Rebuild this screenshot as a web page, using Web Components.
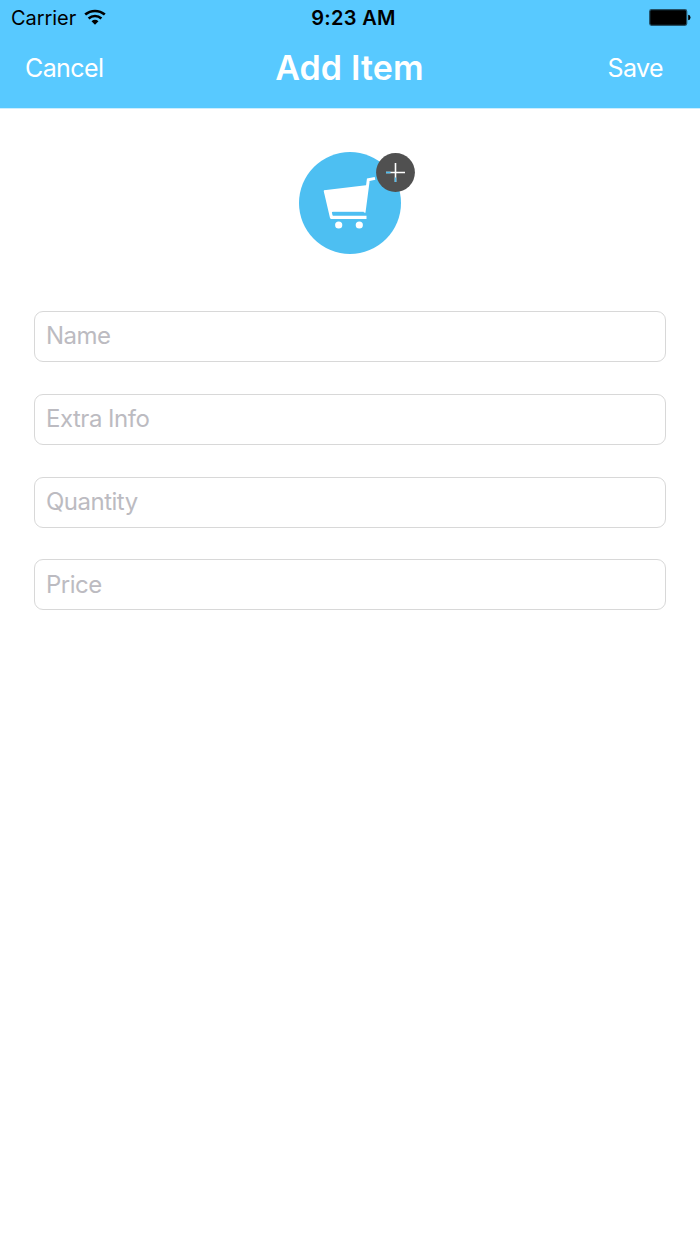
<!DOCTYPE html>
<html lang="en">
<head>
<meta charset="utf-8">
<title>Add Item</title>
<style>
html,body{margin:0;height:100%;background:#fff}
body{font-family:Inter,"Liberation Sans",sans-serif}
</style>
</head>
<body>
<add-item-screen></add-item-screen>
<script>
const define = (name, html) => customElements.define(name, class extends HTMLElement {
  constructor() {
    super();
    const t = document.createElement('template');
    t.innerHTML = html;
    this.attachShadow({ mode: 'open' }).append(t.content.cloneNode(true));
  }
});

define('status-bar', `
<style>
:host{display:grid;grid-template-columns:1fr auto 1fr;align-items:center;height:36px;padding:0 9px 0 11px;box-sizing:border-box;color:#000;font-size:20px;line-height:36px}
.left{display:flex;align-items:center}
.carrier{letter-spacing:-.05px}
.wifi{margin:-3px 0 0 8px;display:block}
.time{font-weight:600;letter-spacing:.3px;transform:translateX(2.5px)}
.battery{justify-self:end;display:block;margin-top:-1px}
</style>
<div class="left"><span class="carrier">Carrier</span>
<svg class="wifi" width="22" height="16" viewBox="0 0 22 16"><g fill="none" stroke="#000" stroke-width="2.6"><path d="M1.2 5.6C6.8.7 15.2.7 20.8 5.6"/><path d="M4.6 9.4C8.3 6.2 13.7 6.2 17.4 9.4"/></g><path d="M7.5 12.2Q11 9.4 14.5 12.2L11 15.8Z"/></svg></div>
<span class="time">9:23 AM</span>
<svg class="battery" width="42" height="17" viewBox="0 0 42 17"><rect x=".7" y=".7" width="37" height="15.6" rx="1.8" stroke="#235066" stroke-width="1.2"/><path d="M39.2 5.8Q41.5 6 41.5 8.5T39.2 11.2Z"/></svg>`);

define('nav-bar', `
<style>
:host{display:grid;grid-template-columns:1fr auto 1fr;align-items:center;height:62px;padding:0 37px 0 25px;color:#fff;font-size:25px;line-height:62px;letter-spacing:-.6px}
.right{justify-self:end}
.title{font-size:34px;font-weight:600;letter-spacing:.15px;transform:translateX(5.5px)}
</style>
<span class="left"><slot name="left"></slot></span><span class="title"><slot></slot></span><span class="right"><slot name="right"></slot></span>`);

define('item-picture', `
<style>
:host{display:block;position:relative;width:102px;height:102px}
svg{display:block}
.cart{filter:blur(.5px)}
.badge{position:absolute;left:77px;top:1px}
</style>
<svg width="102" height="102" viewBox="0 0 102 102"><circle cx="51" cy="51" r="51" fill="#4dbff2"/>
<g class="cart"><path d="M25 38.3L69 33L65.5 60H31Z" fill="#fff"/>
<path d="M76 26.4L69.3 27.8L65 60.5" fill="none" stroke="#fff" stroke-width="3"/>
<path d="M26.2 38.5L32.5 65.3H67.5" fill="none" stroke="#fff" stroke-width="3.2" stroke-linejoin="round"/>
<path d="M33.5 61.2H64.8" stroke="#4dbff2" stroke-width="2.8"/>
<g fill="#fff"><circle cx="39.7" cy="73" r="3.6"/><circle cx="60.3" cy="73" r="3.6"/></g></g></svg>
<svg class="badge" width="39" height="39" viewBox="0 0 39 39"><circle cx="19.5" cy="19.5" r="19.4" fill="#505050"/><path d="M10 19.5H29M19.5 10V29" stroke="#fff" stroke-width="1.6"/><path d="M10 19.5H14.5M19.5 24.5V29" stroke="#4dbff2" stroke-width="1.4"/></svg>`);

define('form-field', `
<style>
:host{display:flex;align-items:center;height:51px;box-sizing:border-box;padding:0 11px;border:1px solid #d8d8d8;border-radius:9px;color:#bcbbc1;font-size:24px;line-height:48px;letter-spacing:-.5px}
span{margin-top:-.6px}
</style>
<span><slot></slot></span>`);

define('add-item-screen', `
<style>
:host{display:flex;flex-direction:column;min-height:100vh;background:#fff}
header{height:108px;background:#58c9ff;border-bottom:1px solid #cbeeff;background-clip:padding-box;box-sizing:content-box}
status-bar{margin-bottom:1px}
item-picture{align-self:center;margin-top:43px}
form{display:grid;gap:31.8px;margin:57px 34px 0}
</style>
<header><status-bar></status-bar><nav-bar><span slot="left">Cancel</span>Add Item<span slot="right">Save</span></nav-bar></header>
<item-picture></item-picture>
<form><form-field>Name</form-field><form-field>Extra Info</form-field><form-field>Quantity</form-field><form-field>Price</form-field></form>`);
</script>
</body>
</html>
